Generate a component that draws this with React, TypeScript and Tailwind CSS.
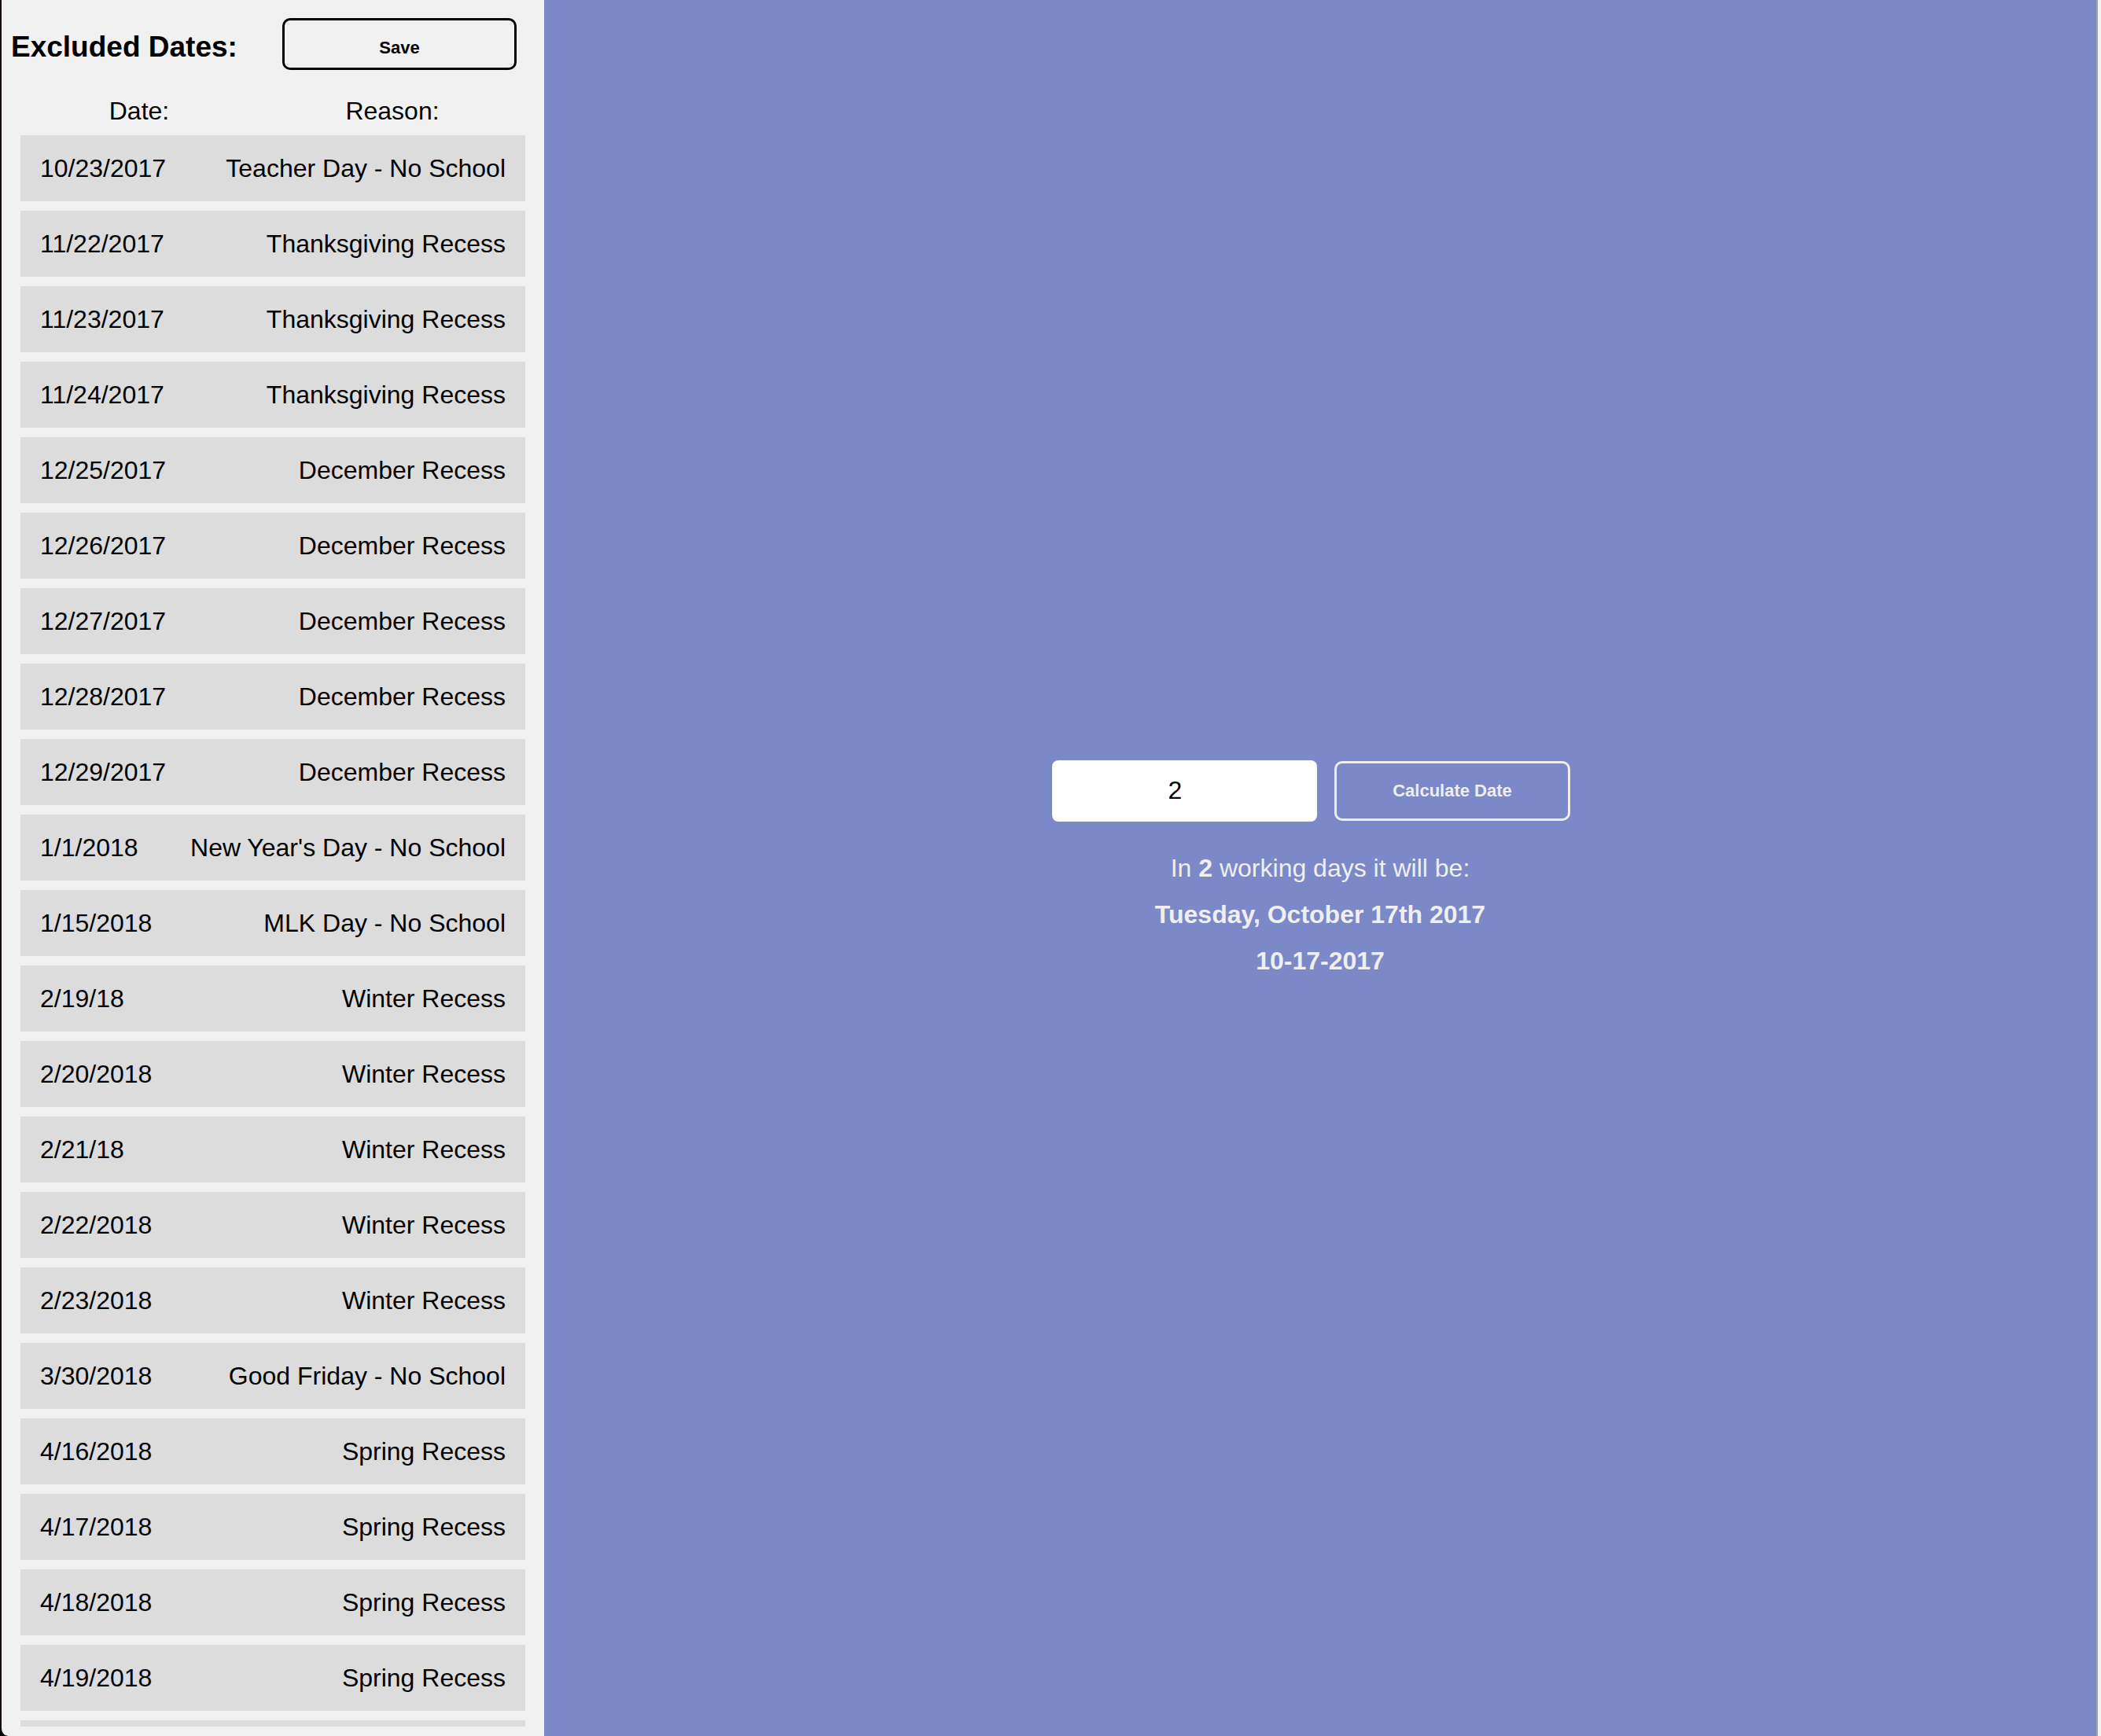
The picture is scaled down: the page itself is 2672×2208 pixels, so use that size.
import React, { useState } from "react";

// Days off for the school year
const excludedDates = [
  { date: "10/23/2017", reason: "Teacher Day - No School" },
  { date: "11/22/2017", reason: "Thanksgiving Recess" },
  { date: "11/23/2017", reason: "Thanksgiving Recess" },
  { date: "11/24/2017", reason: "Thanksgiving Recess" },
  { date: "12/25/2017", reason: "December Recess" },
  { date: "12/26/2017", reason: "December Recess" },
  { date: "12/27/2017", reason: "December Recess" },
  { date: "12/28/2017", reason: "December Recess" },
  { date: "12/29/2017", reason: "December Recess" },
  { date: "1/1/2018", reason: "New Year's Day - No School" },
  { date: "1/15/2018", reason: "MLK Day - No School" },
  { date: "2/19/18", reason: "Winter Recess" },
  { date: "2/20/2018", reason: "Winter Recess" },
  { date: "2/21/18", reason: "Winter Recess" },
  { date: "2/22/2018", reason: "Winter Recess" },
  { date: "2/23/2018", reason: "Winter Recess" },
  { date: "3/30/2018", reason: "Good Friday - No School" },
  { date: "4/16/2018", reason: "Spring Recess" },
  { date: "4/17/2018", reason: "Spring Recess" },
  { date: "4/18/2018", reason: "Spring Recess" },
  { date: "4/19/2018", reason: "Spring Recess" },
];

const App = () => {
  const [days, setDays] = useState("2"); // number of working days

  return (
    <div className="w-[2672px] h-[2208px] flex bg-black font-['Liberation_Sans',Arial,sans-serif] overflow-hidden">
      {/* Excluded dates panel */}
      <div className="w-[692px] h-full flex flex-col bg-[#f1f1f1] border-l-2 border-[#170c12] rounded-bl-[10px] overflow-hidden">
        <div className="flex items-center pt-[23px] pl-[12px]">
          <h1 className="w-[345px] pt-[7px] text-[37px] font-bold text-black">Excluded Dates:</h1>
          <button className="w-[298px] h-[66px] pt-[9px] border-[3px] border-black rounded-[10px] text-[22px] font-bold text-black">
            Save
          </button>
        </div>

        <div className="grid grid-cols-2 w-[644px] ml-[14px] mt-[34px] h-[36px] text-[32px] leading-[36px] text-black text-center">
          <span>Date:</span>
          <span>Reason:</span>
        </div>

        <div className="mt-[13px] mx-6 h-[2024px] overflow-hidden flex flex-col gap-[12px]">
          {excludedDates.map((d, i) => (
            <div
              key={i}
              className="shrink-0 h-[84px] px-[25px] flex justify-between items-center bg-[#dcdcdc] text-[32px] text-black"
            >
              <span>{d.date}</span>
              <span>{d.reason}</span>
            </div>
          ))}
          {/* next row, scrolled out of view */}
          <div className="shrink-0 h-[84px] bg-[#dcdcdc]" />
        </div>
      </div>

      {/* Calculator */}
      <div className="w-[1974px] h-full bg-[#7b89c8] flex flex-col items-center justify-center pt-[10px]">
        <div className="flex items-center h-[78px]">
          <input
            type="text"
            value={days}
            onChange={(e) => setDays(e.target.value)}
            className="w-[337px] h-[78px] rounded-[8px] bg-white text-center pr-[24px] text-[32px] text-black outline-none"
          />
          <button className="ml-[22px] mr-[23px] w-[300px] h-[76px] border-[3px] border-[#eeeeee] rounded-[10px] text-[22px] font-bold text-[#eeeeee]">
            Calculate Date
          </button>
        </div>
        <p className="mt-[30px] text-[32px] leading-[59px] text-[#efefef]">
          In <span className="font-bold">{days}</span> working days it will be:
        </p>
        <p className="text-[32px] leading-[59px] font-bold text-[#efefef]">Tuesday, October 17th 2017</p>
        <p className="text-[32px] leading-[59px] font-bold text-[#efefef]">10-17-2017</p>
      </div>

      {/* edge of the window behind */}
      <div className="w-[6px] h-full border-l-2 border-[#a3a3a3] bg-[#f4f4f4]" />
    </div>
  );
};

export default App;
